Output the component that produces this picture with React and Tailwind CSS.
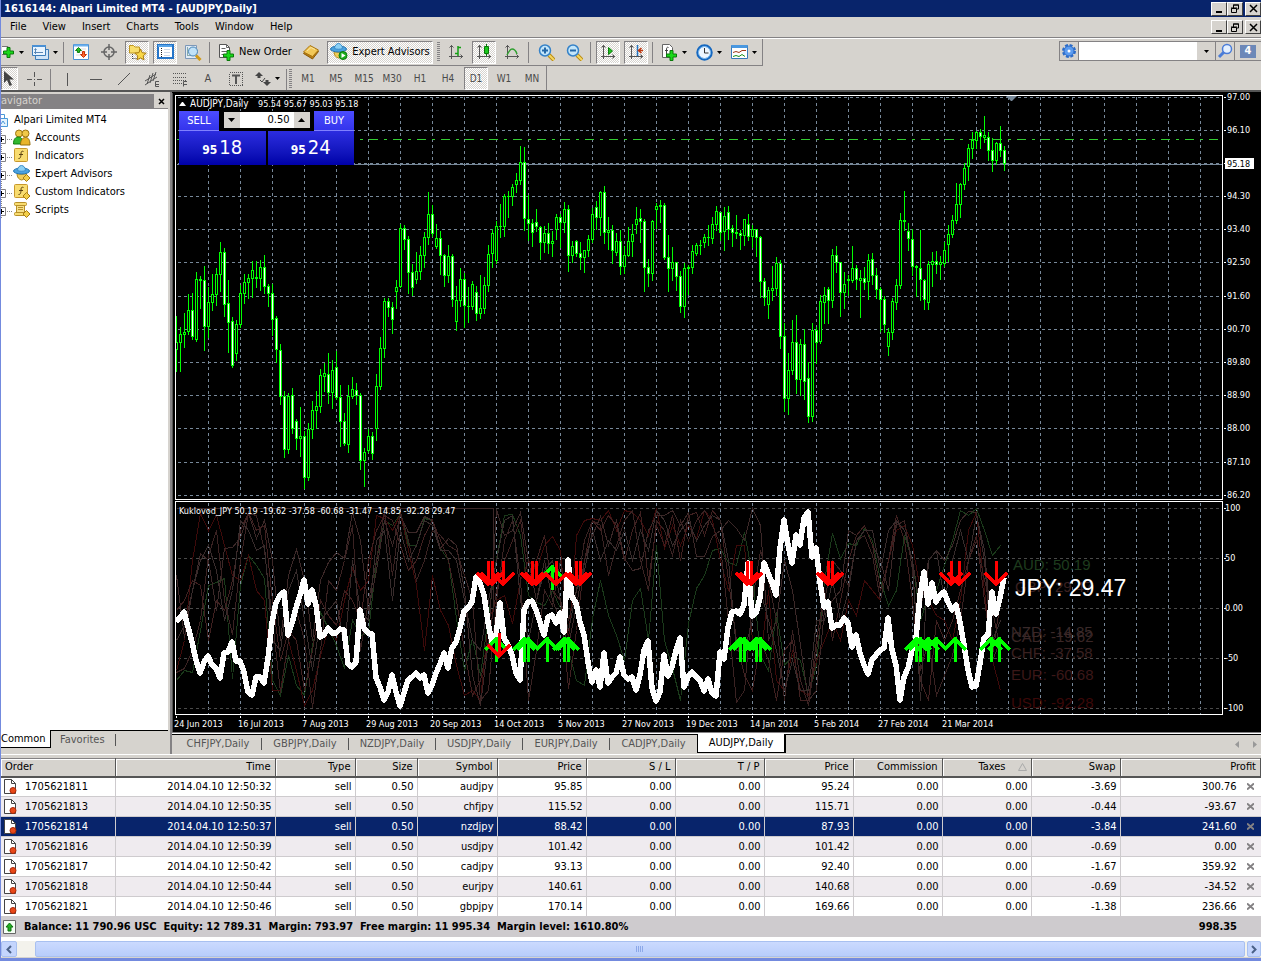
import React from 'react';
import clsx from 'clsx';

const menus = ['File', 'View', 'Insert', 'Charts', 'Tools', 'Window', 'Help'];
const periods = ['M1', 'M5', 'M15', 'M30', 'H1', 'H4', 'D1', 'W1', 'MN'];
const chartTabs = ['CHFJPY', 'GBPJPY', 'NZDJPY', 'USDJPY', 'EURJPY', 'CADJPY', 'AUDJPY'];

const columns = [
  { label: 'Order', width: 'w-[114px]' },
  { label: 'Time', width: 'w-[160px]' },
  { label: 'Type', width: 'w-[80px]' },
  { label: 'Size', width: 'w-[62px]' },
  { label: 'Symbol', width: 'w-[80px]' },
  { label: 'Price', width: 'w-[89px]' },
  { label: 'S / L', width: 'w-[89px]' },
  { label: 'T / P', width: 'w-[89px]' },
  { label: 'Price', width: 'w-[89px]' },
  { label: 'Commission', width: 'w-[89px]' },
  { label: 'Taxes', width: 'w-[89px]' },
  { label: 'Swap', width: 'w-[89px]' },
  { label: 'Profit', width: '' },
];

const orders = [
  { id: '1705621811', sec: '32', symbol: 'audjpy', open: '95.85', price: '95.24', swap: '-3.69', profit: '300.76' },
  { id: '1705621813', sec: '35', symbol: 'chfjpy', open: '115.52', price: '115.71', swap: '-0.44', profit: '-93.67' },
  { id: '1705621814', sec: '37', symbol: 'nzdjpy', open: '88.42', price: '87.93', swap: '-3.84', profit: '241.60', selected: true },
  { id: '1705621816', sec: '39', symbol: 'usdjpy', open: '101.42', price: '101.42', swap: '-0.69', profit: '0.00' },
  { id: '1705621817', sec: '42', symbol: 'cadjpy', open: '93.13', price: '92.40', swap: '-1.67', profit: '359.92' },
  { id: '1705621818', sec: '44', symbol: 'eurjpy', open: '140.61', price: '140.68', swap: '-0.69', profit: '-34.52' },
  { id: '1705621821', sec: '46', symbol: 'gbpjpy', open: '170.14', price: '169.66', swap: '-1.38', profit: '236.66' },
];

// high, body top, body bottom, low, 1 = falling day
const candles = [
  [316,342,349,371,0],[327,334,342,371,0],[313,332,334,347,0],[294,310,331,334,0],[293,310,336,339,1],[272,279,339,341,0],
  [276,279,280,308,0],[266,280,326,350,1],[287,302,326,337,0],[274,294,302,310,0],[268,274,294,305,0],[242,252,274,291,0],
  [248,252,304,316,1],[280,303,322,352,1],[317,321,365,367,1],[320,324,353,360,0],[285,293,324,327,0],[274,282,293,303,0],
  [274,278,282,298,0],[261,270,278,297,0],[261,277,278,287,0],[260,267,278,290,0],[255,267,286,293,1],[284,286,293,306,1],
  [284,293,319,335,1],[316,318,349,362,1],[344,350,396,404,1],[391,396,449,457,1],[393,396,449,453,0],[388,395,428,433,1],
  [419,421,438,449,1],[407,436,438,456,0],[431,436,477,488,1],[423,429,477,480,0],[401,410,429,438,0],[391,406,410,428,0],
  [369,375,406,412,0],[363,373,376,391,0],[353,374,392,403,1],[360,370,392,408,0],[351,367,397,399,1],[385,397,421,446,1],
  [413,421,443,445,1],[385,396,444,452,0],[377,389,396,398,0],[383,390,395,404,1],[393,395,460,469,1],[448,452,460,486,0],
  [429,436,450,452,0],[432,436,453,459,1],[374,386,428,440,0],[337,348,386,389,0],[298,301,348,357,0],[298,301,307,316,1],
  [302,307,319,333,1],[280,287,291,308,0],[224,228,286,287,0],[225,228,239,249,1],[236,239,272,293,1],[264,272,287,295,1],
  [252,271,279,283,0],[246,255,271,279,0],[232,237,255,267,0],[192,214,237,244,0],[205,214,233,236,1],[224,238,246,248,0],
  [231,238,255,274,1],[254,255,275,286,1],[245,256,275,282,0],[254,256,299,306,1],[286,300,321,330,0],[268,279,300,306,0],
  [273,279,305,327,1],[287,306,306,322,0],[281,284,306,309,0],[286,292,313,320,1],[275,308,313,318,0],[277,285,308,313,0],
  [245,254,285,291,0],[229,233,253,267,0],[221,226,260,263,0],[204,226,226,237,0],[194,196,226,236,0],[191,196,196,217,0],
  [184,187,196,205,0],[173,180,184,192,0],[146,162,180,184,0],[147,162,218,230,1],[195,219,223,240,1],[219,223,232,246,1],
  [209,222,226,231,1],[226,227,242,259,1],[226,233,242,252,0],[223,233,243,253,1],[231,241,243,256,0],[214,217,229,239,0],
  [214,217,222,247,1],[202,209,222,232,0],[205,209,255,271,1],[241,246,255,262,0],[240,241,253,256,1],[242,253,257,269,1],
  [250,250,257,272,0],[235,239,250,256,0],[208,214,239,242,0],[201,207,217,229,1],[191,192,217,235,0],[186,192,232,243,1],
  [217,230,232,249,0],[225,230,250,263,1],[233,241,252,255,0],[230,241,266,274,1],[246,255,266,273,0],[227,241,255,256,0],
  [224,234,241,256,0],[207,219,224,233,0],[209,218,221,242,1],[219,221,267,291,1],[259,267,273,286,1],[220,221,273,280,0],
  [203,206,209,228,0],[200,205,206,222,0],[203,205,257,259,1],[235,257,268,291,1],[247,262,268,280,0],[262,262,276,290,1],
  [271,276,306,312,1],[263,268,306,317,0],[265,267,268,294,0],[245,251,267,273,0],[243,245,253,255,0],[240,245,245,254,0],
  [234,237,242,247,0],[225,237,237,245,0],[217,224,238,243,0],[206,211,224,230,0],[212,212,232,240,1],[207,216,231,250,0],
  [206,212,229,239,1],[225,228,232,246,1],[215,232,233,238,0],[230,233,235,249,1],[219,219,235,245,0],[214,224,236,240,1],
  [225,229,236,247,0],[229,229,237,256,1],[236,237,281,297,1],[278,281,297,305,1],[287,290,304,318,0],[266,288,290,300,0],
  [257,263,288,295,0],[260,263,336,348,1],[323,336,398,411,1],[353,370,398,414,0],[320,342,370,374,0],[315,342,379,393,1],
  [339,344,379,395,0],[329,344,381,399,1],[362,378,416,422,1],[323,330,416,421,0],[327,330,342,363,1],[295,301,341,343,0],
  [287,295,302,323,0],[287,289,300,323,1],[249,255,300,307,0],[246,255,262,272,1],[262,262,292,316,1],[272,284,292,308,0],
  [275,279,280,295,0],[246,268,280,282,0],[265,268,279,289,1],[270,278,280,317,0],[267,278,282,289,1],[254,260,281,299,0],
  [253,259,275,284,1],[268,275,289,298,1],[287,289,299,331,1],[296,299,324,332,1],[328,332,346,355,0],[298,301,332,339,0],
  [279,285,302,309,0],[213,220,285,288,0],[191,220,221,230,0],[223,231,238,250,1],[229,239,266,275,1],[265,266,267,296,0],
  [230,268,279,300,1],[279,280,299,309,1],[261,264,302,309,0],[252,261,264,286,0],[251,261,264,273,1],[256,262,264,279,0],
  [242,250,263,266,0],[225,234,244,261,0],[215,220,234,237,0],[183,204,220,223,0],[183,184,204,217,0],[163,168,184,189,0],
  [144,148,166,180,0],[132,140,148,158,0],[131,132,140,148,0],[129,132,136,148,1],[116,135,137,142,0],[132,137,150,160,1],
  [138,150,160,171,1],[142,143,160,164,0],[126,143,150,156,1],[146,150,163,170,1],
];

// strength of the yen, one value per bar
const strength = [
  621,618,612,627,642,660,673,662,656,665,668,678,653,652,642,661,661,672,692,695,677,677,683,658,623,603,595,592,635,623,
  608,595,580,604,590,605,637,635,628,633,633,629,630,664,667,662,610,628,633,634,678,687,700,692,675,692,706,693,680,677,
  673,678,675,693,685,673,664,653,668,648,642,628,611,608,602,577,583,595,622,642,635,603,638,645,655,673,680,610,602,601,
  610,622,635,617,615,623,613,632,560,597,603,622,635,662,682,670,687,653,683,677,673,657,675,679,677,690,675,650,641,688,
  701,692,655,676,667,650,638,687,677,672,677,680,691,679,693,696,652,659,627,612,611,614,605,563,616,613,598,563,573,583,
  595,548,520,545,563,535,545,518,512,557,548,582,607,602,628,625,625,618,623,647,635,653,665,674,660,655,650,648,618,650,
  665,700,677,668,650,638,595,572,604,583,602,595,592,602,610,605,622,645,670,687,686,663,638,635,592,614,598,578,
];

// remaining currencies, one value per two bars
const others = [
  { color: '#1a3a1a', ys: [680,670,672,630,585,582,578,678,585,555,565,578,680,695,655,685,695,645,612,628,645,668,620,635,632,560,520,525,513,545,545,518,520,548,560,618,670,638,675,615,558,515,514,535,595,602,605,590,608,650,680,685,618,580,615,635,660,600,588,640,545,640,668,700,623,588,575,550,548,562,565,532,575,655,670,612,665,655,660,695,665,580,533,558,543,545,528,540,580,605,590,535,560,620,595,590,565,540,510,515,508,530,555,545] },
  { color: '#3e0a0a', ys: [670,640,560,513,530,515,545,575,580,555,590,600,690,690,640,670,705,690,655,628,640,600,568,590,580,515,518,530,514,550,585,650,575,610,625,665,695,690,700,620,600,595,623,580,560,570,545,536,550,640,535,520,518,520,510,530,510,512,520,535,508,548,525,545,525,538,510,520,560,590,545,545,640,660,590,680,690,650,690,695,660,640,620,640,600,615,580,590,600,560,530,525,545,590,600,615,620,640,600,530,512,590,660,690] },
  { color: '#3c2828', ys: [575,637,590,553,560,610,548,547,537,512,538,520,560,640,575,549,580,640,580,562,552,558,512,540,610,570,520,545,515,532,532,516,520,548,538,545,590,675,705,640,509,535,530,512,560,600,560,600,620,645,605,560,535,516,545,520,558,570,568,530,515,515,510,525,512,556,556,536,530,520,528,540,508,525,640,620,560,590,645,700,690,610,600,590,530,535,525,545,560,590,520,530,560,610,560,550,560,545,520,511,512,560,660,640] },
  { color: '#3a2222', ys: [672,668,650,620,555,530,600,634,560,513,515,550,620,692,640,610,640,707,650,580,590,560,525,650,600,560,510,575,512,540,580,560,530,535,545,550,575,600,700,690,600,540,520,580,700,650,590,605,560,620,590,540,520,525,575,545,520,510,560,590,520,530,555,520,540,520,510,525,545,620,702,690,600,550,580,620,700,630,680,705,650,600,560,570,585,540,535,555,600,560,525,520,570,670,640,695,675,655,620,560,540,580,610,650] },
  { color: '#402020', ys: [610,600,580,585,640,600,610,580,530,512,530,525,600,660,630,640,690,650,600,615,625,590,600,620,560,530,515,520,545,570,560,535,520,540,560,600,650,695,680,640,590,560,540,520,580,560,535,590,600,688,630,560,520,530,515,525,560,530,512,580,525,545,515,560,515,512,535,510,520,580,640,675,690,640,660,700,650,640,700,700,640,590,640,600,560,535,525,545,590,560,515,540,600,680,700,620,640,620,590,560,535,600,655,600] },
  { color: '#382c2c', ys: [640,625,590,560,545,570,620,590,520,530,550,545,640,650,590,570,620,670,620,610,600,650,560,610,620,540,530,600,530,560,545,520,525,550,550,560,600,640,650,600,560,520,515,600,640,600,570,560,600,630,590,570,530,560,540,550,530,560,530,550,510,520,545,530,520,540,525,515,520,560,650,650,620,590,620,650,690,660,690,690,620,620,580,620,590,540,530,530,570,530,520,530,560,700,560,550,600,560,530,560,515,550,640,620] },
];

const gridX = Array.from({ length: 32 }, (_, i) => 208 + i * 32);
const priceScale = [
  [97, '97.00'], [130, '96.10'], [163, ''], [196, '94.30'], [229, '93.40'], [262, '92.50'], [296, '91.60'],
  [329, '90.70'], [362, '89.80'], [395, '88.90'], [428, '88.00'], [462, '87.10'], [495, '86.20'],
];
const levelScale = [[508, '100'], [558, '50'], [608, '0.00'], [658, '-50'], [708, '-100']];
const dates = [
  '24 Jun 2013', '16 Jul 2013', '7 Aug 2013', '29 Aug 2013', '20 Sep 2013', '14 Oct 2013', '5 Nov 2013',
  '27 Nov 2013', '19 Dec 2013', '14 Jan 2014', '5 Feb 2014', '27 Feb 2014', '21 Mar 2014',
];
const ghostLabels = [
  ['AUD: 50.19', 1013, 570, '#1e3c1e'],
  ['GBP: 29.47', 1015, 592, '#3a2020'],
  ['NZD: -14.85', 1011, 637, '#3a2a2a'],
  ['CAD: -19.62', 1011, 642, '#3a2626'],
  ['CHF: -37.58', 1011, 658, '#3a2020'],
  ['EUR: -60.68', 1011, 680, '#3c1818'],
  ['USD: -92.28', 1011, 708, '#3c0808'],
];
const buys = [
  [496, 637], [524, 637], [528, 637], [547, 637], [564, 637], [568, 637], [552, 565], [740, 637], [744, 637], [756, 637], [760, 637],
  [916, 637], [920, 637], [928, 637], [936, 637], [955, 637], [991, 637], [999, 637],
];
const sells = [
  [488, 561], [492, 561], [503, 561], [532, 561], [536, 561], [556, 561], [576, 561], [580, 561], [499, 633],
  [747, 561], [751, 561], [828, 561], [832, 561], [951, 561], [959, 561], [996, 561],
];

const Svg = ({ w = 16, h = 16, children }) => (
  <svg width={w} height={h} viewBox={`0 0 ${w} ${h}`} className="shrink-0" fill="none" aria-hidden="true">
    {children}
  </svg>
);

const Plus = ({ x, y }) => (
  <path transform={`translate(${x} ${y})`} d="M4 .5h3V4h3.500v3H7v3.500H4V7H.5V4H4z" fill="#19d819" stroke="#0a7a0a" />
);

const Drop = () => <Svg w={5} h={3}><path d="M0 0h5L2.500 3z" fill="#000" /></Svg>;

const Axes = ({ children }) => (
  <Svg>
    <path d="M3.500 1v14M1 12.500h14M1.500 3.500l2-2 2 2M12.500 10.500l2 2-2 2" stroke="#555" />
    {children}
  </Svg>
);

const Hat = ({ children }) => (
  <Svg w={18} h={18}>
    <path d="M4 8.500c0 4 2 6 4.500 6.500 3-.5 5-2.500 5-6.500-3 1-6 1-9.500 0z" fill="#f0cc58" stroke="#b08a20" />
    <ellipse cx="8.500" cy="6" rx="8" ry="3" fill="#4aa2e0" stroke="#2474b0" />
    <path d="M4.500 5.500c0-3 2-5 4-5s4 2 4 5c-2 1-6 1-8 0z" fill="#8cd0f4" stroke="#3a8cc8" />
    {children}
  </Svg>
);

const Diamond = () => <path d="M13.500 9.500l3.500 3.500-3.500 3.500-3.500-3.500z" fill="#f3cf4a" stroke="#a87d10" />;

const Lens = ({ minus }) => (
  <Svg w={17} h={17}>
    <path d="M11 11l5 5" stroke="#b98a10" strokeWidth="4" />
    <path d="M11 11l5 5" stroke="#f5d660" strokeWidth="2" />
    <circle cx="7" cy="6.500" r="5.500" fill="#c4e6fa" stroke="#3582c8" strokeWidth="1.500" />
    <path d={minus ? 'M4 6.500h6' : 'M4 6.500h6M7 3.500v6'} stroke="#2468a8" strokeWidth="2" />
  </Svg>
);

const icons = {
  newChart: <Svg w={13} h={16}><path d="M0 2.500h6v8H0" fill="#fff" stroke="#777" /><Plus x={1} y={3} /></Svg>,
  profiles: (
    <Svg w={18}>
      <path d="M4.500 5.500h13v10h-13z" fill="#cfe4f8" stroke="#3d7cb8" />
      <path d="M1.500 1.500h13v10h-13z" fill="#e8f4ff" stroke="#3d7cb8" />
      <path d="M1 2h14" stroke="#4a90d4" strokeWidth="2" />
      <path d="M4.500 5v5M3 8.500h9M3.500 6l1-1.500 1 1.500" stroke="#5b87b5" />
    </Svg>
  ),
  market: (
    <Svg>
      <path d="M.5.5h15v15H.5z" fill="#fff" stroke="#4a90d4" />
      <path d="M1 1.500h14" stroke="#6cb0ee" strokeWidth="2" />
      <path d="M3 5h10M3 8h10M3 11h10" stroke="#ddd" />
      <path d="M5.500 3.500l3 3h-2v2h-2v-2h-2z" fill="#22c022" stroke="#128012" />
      <path d="M10.500 13.500l3-3h-2v-3h-2v3h-2z" fill="#ff6a30" stroke="#c83208" />
    </Svg>
  ),
  target: (
    <Svg>
      <circle cx="8" cy="8" r="5" stroke="#666" strokeWidth="1.500" />
      <path d="M8 0v6M8 10v6M0 8h6M10 8h6" stroke="#666" strokeWidth="1.500" />
    </Svg>
  ),
  navigator: (
    <Svg w={19} h={17}>
      <path d="M1.500 3V1.500h4L7 3h4.500v6h-10z" fill="#f9df6c" stroke="#c09820" />
      <path d="M4.500 10v5M4.500 14.500h5" stroke="#444" strokeDasharray="1 1" />
      <path d="M12.500 5l1.700 3.700 4 .5-3 2.700.8 4-3.500-2-3.500 2 .8-4-3-2.700 4-.5z" fill="#f9d848" stroke="#a87a10" />
    </Svg>
  ),
  terminal: (
    <Svg w={17}>
      <rect x="1" y="1" width="15" height="13" fill="#fff" stroke="#2474c8" strokeWidth="2" />
      <path d="M1 2h14" stroke="#58a4e8" strokeWidth="2" />
      <path d="M4.500 4v9" stroke="#222" strokeDasharray="1 1" />
      <path d="M7 5.500h6M7 8.500h6M7 11.500h6" stroke="#ccd8e8" />
    </Svg>
  ),
  tester: (
    <Svg w={18} h={17}>
      <path d="M1.500 1.500h11v13h-11z" fill="#e2ebf5" stroke="#7c98b8" />
      <path d="M3.500 3v9M3 11.500h8M5 4l2 3 3-3" stroke="#8aa" />
      <circle cx="9" cy="7.500" r="4.500" fill="#c0e2f8" stroke="#4a86b8" />
      <path d="M12 11.500l4.500 4.500" stroke="#d09a18" strokeWidth="3" />
    </Svg>
  ),
  order: (
    <Svg w={17} h={17}>
      <path d="M1.500.5h7l3 3v10h-10z" fill="#fff" stroke="#555" />
      <path d="M8.500.5v3h3M3.500 4.500h4M3.500 7.500h6M3.500 10.500h3" stroke="#666" />
      <Plus x={5} y={6} />
    </Svg>
  ),
  book: (
    <Svg>
      <path d="M.5 9.500L7 2.500l8.500 5-6 7.500z" fill="#b87c10" stroke="#8a5a08" />
      <path d="M.5 8L7 1.500l8.500 4.500L9.500 12.500z" fill="#f2c858" stroke="#a87410" />
      <path d="M4 7l4-3.500 4 2" stroke="#fbe7a4" />
    </Svg>
  ),
  expert: <Hat><circle cx="13" cy="12.500" r="4" fill="#1cae1c" stroke="#0c7a0c" /><path d="M11.500 10l4 2.500-4 2.500z" fill="#fff" /></Hat>,
  bars: <Axes><path d="M10 2v10M10 3.500h3M7 9.500h3" stroke="#14a014" strokeWidth="1.500" /></Axes>,
  candle: <Axes><path d="M10.500 0v12" stroke="#087808" /><path d="M8.500 2.500h4v7h-4z" fill="#1cc81c" stroke="#087808" /></Axes>,
  line: <Axes><path d="M3 11c2-4 3-6 5-6 2.500 0 4 2 5 5" stroke="#30a030" strokeWidth="1.500" /></Axes>,
  scroll: <Axes><path d="M8.500 3.500l4 3.500-4 3.500z" fill="#20c020" stroke="#0a800a" /></Axes>,
  shift: <Axes><path d="M9.500 1v11" stroke="#2474c0" strokeWidth="1.500" /><path d="M15 6.500h-4M13.500 4l-3 2.500 3 2.500" stroke="#c03810" strokeWidth="1.500" /></Axes>,
  indicators: (
    <Svg w={17} h={17}>
      <path d="M1.500.5h7l3 3v10h-10z" fill="#fff" stroke="#666" />
      <path d="M7.500 3.500c-2-1-2 1-2 2.500v5M4 6.500h3" stroke="#444" />
      <Plus x={5} y={6} />
    </Svg>
  ),
  clock: (
    <Svg w={17} h={17}>
      <circle cx="8.500" cy="8.500" r="7" fill="#eef6ff" stroke="#1668c0" strokeWidth="2.500" />
      <circle cx="8.500" cy="8.500" r="6" stroke="#8cc4f4" />
      <path d="M8.500 4v5h4" stroke="#333" />
    </Svg>
  ),
  template: (
    <Svg w={17}>
      <path d="M.5 1.500h16v13H.5z" fill="#fff" stroke="#3878b8" />
      <path d="M.5 2.500h16" stroke="#4a98e0" strokeWidth="3" />
      <path d="M2 8.500l3-1 3 1 3-2 4 0" stroke="#a03818" />
      <path d="M2 12.500l3-1 3 1 3-2 3 2" stroke="#189018" />
    </Svg>
  ),
  pointer: <Svg w={12} h={16}><path d="M0 0v12l3-3 2.500 6 2.500-1-2.500-5.500H10z" fill="#444" /></Svg>,
  cross: <Svg><path d="M8.500 1v5M8.500 11v4M1 8.500h5M11 8.500h5M8 8.500h1" stroke="#555" /></Svg>,
  vline: <Svg><path d="M7.500 2v13" stroke="#555" /></Svg>,
  hline: <Svg><path d="M2 8.500h12" stroke="#555" /></Svg>,
  trend: <Svg><path d="M2 14L14 2" stroke="#555" /></Svg>,
  channel: (
    <Svg>
      <path d="M1 10L12 3M1 14L13 6M3 13L6 4M6 12L9 2M9 10l3-9" stroke="#555" />
      <path d="M15 10.500h-3.500v5H15M12 13.500h3" stroke="#555" />
    </Svg>
  ),
  fibo: (
    <Svg>
      <path d="M1 2.500h14M1 6.500h14M1 9.500h14M1 12.500h9" stroke="#555" strokeDasharray="1 1" />
      <path d="M15 10.500h-3.500v5M12 13.500h3" stroke="#555" />
    </Svg>
  ),
  label: (
    <Svg>
      <path d="M1.500 1.500h13v13h-13z" stroke="#555" strokeDasharray="1 1" shapeRendering="crispEdges" />
      <path d="M4 4.500h8M8 4v9" stroke="#555" strokeWidth="2" />
    </Svg>
  ),
  shapes: (
    <Svg>
      <path d="M4 1l4 4H5.500v2h-3V5H0zM12 15l-4-4h2.500V9h3v2H16z" fill="#444" />
      <path d="M5 9l2 2 3-4" stroke="#444" />
    </Svg>
  ),
};

const pressedLook =
  'border border-t-[#848284] border-l-[#848284] border-r-white border-b-white bg-[conic-gradient(#fff_25%,#d6d3ce_0_50%,#fff_0_75%,#d6d3ce_0)] bg-[length:2px_2px]';

const Tool = ({ label, icon, drop, text, pressed, width = 'w-6' }) => (
  <button
    type="button"
    aria-label={label}
    className={clsx('flex h-[23px] shrink-0 items-center justify-center gap-1', width, pressed && pressedLook)}
  >
    {icon}
    {text && <span className="whitespace-nowrap">{text}</span>}
    {drop && <Drop />}
  </button>
);

const Sep = () => <div className="h-[21px] w-0.5 shrink-0 border-l border-[#848284]" />;

const Grip = () => (
  <div className="h-5 w-[3px] shrink-0 bg-[repeating-linear-gradient(#848284_0_1px,#d6d3ce_1px_2px)]" />
);

const CaptionButtons = () => (
  <div className="flex">
    {['Minimize', 'Restore', 'Close'].map((name) => (
      <button
        key={name}
        type="button"
        aria-label={name}
        className={clsx(
          'flex h-[14px] w-4 items-center justify-center border border-t-white border-l-white border-r-[#404040] border-b-[#404040] bg-[#d6d3ce]',
          name === 'Close' && 'ml-0.5'
        )}
      >
        <Svg w={9} h={9}>
          {name === 'Minimize' && <path d="M1 8h6" stroke="#000" strokeWidth="2" />}
          {name === 'Restore' && <path d="M2.500 4V1h5v4H6M.5 4.500h5v4h-5zM2 1h6M0 4h6" stroke="#000" />}
          {name === 'Close' && <path d="M1 1l7 7M8 1L1 8" stroke="#000" strokeWidth="1.500" />}
        </Svg>
      </button>
    ))}
  </div>
);

const Toolbars = () => (
  <div className="flex justify-between">
    <div>
      <div className="flex h-[27px] w-[762px] items-center gap-1 border-r border-b border-[#848284]">
        <Tool label="New chart" icon={icons.newChart} drop />
        <Tool label="Profiles" icon={icons.profiles} drop width="w-[30px]" />
        <Sep />
        <Tool label="Market watch" icon={icons.market} />
        <Tool label="Data window" icon={icons.target} />
        <Tool label="Navigator" icon={icons.navigator} pressed />
        <Tool label="Terminal" icon={icons.terminal} pressed />
        <Tool label="Strategy tester" icon={icons.tester} />
        <Sep />
        <Tool label="New Order" icon={icons.order} text="New Order" width="w-[80px]" />
        <Tool label="MetaEditor" icon={icons.book} />
        <Tool label="Expert Advisors" icon={icons.expert} text="Expert Advisors" pressed width="w-[106px]" />
        <Grip />
        <Tool label="Bar chart" icon={icons.bars} />
        <Tool label="Candlesticks" icon={icons.candle} pressed />
        <Tool label="Line chart" icon={icons.line} />
        <Sep />
        <Tool label="Zoom in" icon={<Lens />} />
        <Tool label="Zoom out" icon={<Lens minus />} />
        <Sep />
        <Tool label="Auto scroll" icon={icons.scroll} pressed />
        <Tool label="Chart shift" icon={icons.shift} pressed />
        <Sep />
        <Tool label="Indicators" icon={icons.indicators} drop width="w-[31px]" />
        <Tool label="Periods" icon={icons.clock} drop width="w-[31px]" />
        <Tool label="Templates" icon={icons.template} drop width="w-[31px]" />
      </div>
      <div className="flex h-6 w-[546px] items-end gap-1 border-r border-[#848284] text-[#4a4a4a]">
        <Tool label="Cursor" icon={icons.pointer} pressed width="w-[17px]" />
        <Tool label="Crosshair" icon={icons.cross} />
        <Sep />
        <Tool label="Vertical line" icon={icons.vline} />
        <Tool label="Horizontal line" icon={icons.hline} />
        <Tool label="Trendline" icon={icons.trend} />
        <Tool label="Channel" icon={icons.channel} />
        <Tool label="Fibonacci" icon={icons.fibo} />
        <Tool label="Text" text="A" />
        <Tool label="Text label" icon={icons.label} />
        <Tool label="Arrows" icon={icons.shapes} drop width="w-[30px]" />
        <div className="flex gap-px">
          <Sep />
          <Grip />
        </div>
        <div className="flex gap-1 text-[10px]">
          {periods.map((p) => <Tool key={p} label={p} text={p} pressed={p === 'D1'} />)}
        </div>
      </div>
    </div>
    <div className="mt-0.5 flex h-5 border border-r-0 border-[#848284]">
      <button type="button" aria-label="Search options" className="flex w-[19px] items-center justify-center border-r border-[#848284]">
        <Svg>
          <circle cx="8" cy="8" r="6" stroke="#2c6cc8" strokeWidth="2" strokeDasharray="3 1.700" />
          <circle cx="8" cy="8" r="5" fill="#5c9cf0" stroke="#2868c8" />
          <circle cx="8" cy="8" r="1.500" fill="#fff" />
        </Svg>
      </button>
      <input aria-label="Search" className="w-[118px] bg-white px-1 outline-none" />
      <button type="button" aria-label="Search history" className="flex w-[19px] items-center justify-center border-r border-[#848284]">
        <Drop />
      </button>
      <button type="button" aria-label="Find" className="flex w-[19px] items-center justify-center border-r border-[#848284]">
        <Svg>
          <path d="M7 9l-5 5" stroke="#4a7cd8" strokeWidth="3" />
          <circle cx="10" cy="6" r="4.500" fill="#e4f0ff" stroke="#4a7cd8" strokeWidth="1.500" />
        </Svg>
      </button>
      <button type="button" aria-label="Messages" className="flex w-[26px] items-center justify-center">
        <span className="flex h-[13px] w-4 items-center justify-center bg-[#6c88b8] font-bold text-white">4</span>
      </button>
    </div>
  </div>
);

const FunctionIcon = ({ children }) => (
  <Svg w={18} h={18}>
    <rect x="1.500" y="1.500" width="13" height="13" rx="1" fill="#f8dc70" stroke="#c8982c" />
    <path d="M10.500 4.500c-2-1-2.500.5-2.500 2.500s-.5 5-2.500 4.500M6 7.500h4" stroke="#5a4010" />
    {children}
  </Svg>
);

const treeItems = [
  {
    name: 'Accounts',
    icon: (
      <Svg w={18} h={18}>
        <circle cx="6" cy="4.500" r="3.500" fill="#f0c848" stroke="#9a7410" />
        <circle cx="12.500" cy="4.500" r="3.500" fill="#f0c848" stroke="#9a7410" />
        <path d="M.5 15c0-5 2-7 5-7s4 2 4 7z" fill="#30b830" stroke="#0f7c0f" />
        <path d="M7.500 16c0-5 2-7.500 5-7.500s4.500 2.500 4.500 7.500z" fill="#e8b428" stroke="#94700c" />
      </Svg>
    ),
  },
  { name: 'Indicators', icon: <FunctionIcon /> },
  { name: 'Expert Advisors', icon: <Hat><Diamond /></Hat> },
  { name: 'Custom Indicators', icon: <FunctionIcon><Diamond /></FunctionIcon> },
  {
    name: 'Scripts',
    icon: (
      <Svg w={18} h={18}>
        <path d="M3.500 4v9h8V4z" fill="#f6e088" stroke="#b89028" />
        <rect x="1.500" y="1.500" width="12" height="3" rx="1" fill="#f8dc70" stroke="#b89028" />
        <rect x="1.500" y="11.500" width="12" height="3" rx="1" fill="#f8dc70" stroke="#b89028" />
        <path d="M5 6.500h5M5 8.500h5" stroke="#b89028" />
        <Diamond />
      </Svg>
    ),
  },
];

const Navigator = () => (
  <aside className="flex w-[171px] shrink-0 flex-col border-r-2 border-[#848284] pt-0.5 pr-0.5">
    <div className="flex h-[14px] items-center">
      <div className="h-full flex-1 overflow-hidden bg-[#848284] leading-[14px] text-[#d6d3ce]">avigator</div>
      <button type="button" aria-label="Close navigator" className="flex w-[14px] justify-center">
        <Svg w={7} h={7}><path d="M1 1l5 5M6 1L1 6" stroke="#000" strokeWidth="1.500" /></Svg>
      </button>
    </div>
    <div className="flex-1 border-t border-[#848284] bg-white pt-0.5">
      <div className="flex h-[18px] items-center gap-1.5">
        <Svg w={7}>
          <path d="M0 2.500h3.500V6" stroke="#4a98d8" />
          <path d="M-3 6.500h9.500v8H-3z" fill="#e4f2fc" stroke="#4a98d8" />
          <path d="M0 12l2-3 2 3" stroke="#4a98d8" />
        </Svg>
        Alpari Limited MT4
      </div>
      <ul>
        {treeItems.map((item) => (
          <li key={item.name} className="flex h-[18px] items-center">
            <Svg w={12} h={18}>
              <path d="M.5 0v6M.5 14v4M6 10.500h5" stroke="#888" strokeDasharray="1 1" />
              <path d="M-4 6.500h8.500v8H-4" stroke="#848284" />
              <path d="M-1 10.500h4M.5 8v5" stroke="#000" />
            </Svg>
            {item.icon}
            <span className="ml-1">{item.name}</span>
          </li>
        ))}
      </ul>
    </div>
    <div className="flex h-6 text-[#555]">
      <button type="button" className="h-[18px] w-[50px] border-r border-b border-black bg-white pr-2 text-right leading-[17px] text-black">
        Common
      </button>
      <div className="flex h-[18px] flex-1 items-center gap-2.5 border-t border-black pl-[9px]">
        <button type="button">Favorites</button>
        <span className="h-3 w-px bg-[#555]" />
      </div>
    </div>
  </aside>
);

const toPoints = (ys, step) => ys.map((y, i) => `${176 + i * step},${y}`).join(' ');

const PriceChart = () => (
  <svg viewBox="172 92 1089 640" className="block h-auto w-full bg-black text-[9px]" role="img" aria-label="AUDJPY daily chart">
    <g shapeRendering="crispEdges" transform="translate(0.5 0.5)" fill="none">
      <g stroke="#778899" strokeDasharray="3 3">
        {gridX.map((x) => <path key={x} d={`M${x} 96V498M${x} 502V713`} />)}
        {priceScale.map(([y]) => <path key={y} d={`M177 ${y}H1221`} />)}
      </g>
      <g stroke="#4a4a4a" strokeDasharray="3 3">
        {levelScale.map(([y]) => <path key={y} d={`M177 ${y}H1221`} />)}
      </g>
      <path d="M176 139H1218" stroke="#32cd32" strokeDasharray="9 6 3 6" />
      <path d="M176 164H1222" stroke="#778899" />
      {others.map((line) => (
        <polyline key={line.color} points={toPoints(line.ys, 8)} stroke={line.color} />
      ))}
      <path d="M176 508H493V608" stroke="#3c2828" />
    </g>

    {/* whole-pixel boxes: wick, outline, then the one pixel core */}
    <g shapeRendering="crispEdges">
      {candles.map(([high, top, bottom, low, falling], i) => (
        <g key={i} fill="#00ff00">
          <rect x={176 + i * 4} y={high} width="1" height={low - high + 1} />
          <rect x={175 + i * 4} y={top} width="3" height={bottom - top + 1} />
          {bottom - top > 1 && (
            <rect x={176 + i * 4} y={top + 1} width="1" height={bottom - top - 1} fill={falling ? '#fff' : '#000'} />
          )}
        </g>
      ))}
    </g>

    <g fontFamily="Liberation Sans" fontSize="15">
      {ghostLabels.map(([text, x, y, color]) => <text key={text} x={x} y={y} fill={color}>{text}</text>)}
    </g>
    <polyline points={toPoints(strength, 4)} fill="none" stroke="#fff" strokeWidth="5.500" strokeLinejoin="round" shapeRendering="crispEdges" />
    <g fill="none" strokeWidth="3" shapeRendering="crispEdges">
      {buys.map(([x, y]) => (
        <path key={`${x}-${y}`} d={`M${x} ${y}v25M${x - 11} ${y + 13}l11 -11l11 11`} stroke="#00ff00" />
      ))}
      {sells.map(([x, y]) => (
        <path key={`${x}-${y}`} d={`M${x} ${y}v24M${x - 11} ${y + 12}l11 11l11 -11`} stroke="#ff0000" />
      ))}
    </g>
    <text x="1015" y="596" fontFamily="Liberation Sans" fontSize="23" fill="#fff">JPY: 29.47</text>

    <g shapeRendering="crispEdges" transform="translate(0.5 0.5)" fill="none" stroke="#fff">
      <path d="M175 499V95H1222V499ZM175 714V501H1222V714Z" />
      {priceScale.map(([y]) => <path key={y} d={`M1223 ${y}h2`} />)}
      {levelScale.map(([y]) => <path key={y} d={`M1223 ${y}h2`} />)}
      {dates.map((d, i) => <path key={d} d={`M${176 + i * 64} 715v2`} />)}
      <path d="M172 92V732" stroke="#555" />
    </g>
    <path d="M1006 96h11l-5 5h-1z" fill="#778899" />
    <path d="M179 106h7l-3-4h-1z" fill="#fff" />

    <g fill="#fff">
      <text x="190" y="107" fontSize="10">AUDJPY,Daily</text>
      <text x="258" y="107">95.54 95.67 95.03 95.18</text>
      <text x="179" y="514">Kuklovod_JPY 50.19 -19.62 -37.58 -60.68 -31.47 -14.85 -92.28 29.47</text>
      {priceScale.map(([y, text]) => text && <text key={y} x="1227" y={y + 3}>{text}</text>)}
      {levelScale.map(([y, text]) => <text key={y} x="1225" y={y + 3}>{text}</text>)}
      {dates.map((d, i) => <text key={d} x={174 + i * 64} y="727">{d}</text>)}
    </g>
    <rect x="1225" y="158" width="29" height="11" fill="#fff" />
    <text x="1227" y="167" fill="#000">95.18</text>
  </svg>
);

const PriceButton = ({ small, big }) => (
  <button type="button" className="flex h-[34px] flex-1 items-baseline justify-center gap-0.5 bg-linear-to-b from-[#2c2ce0] to-[#0000a8]">
    <span className="text-[12px] leading-8 font-bold">{small}</span>
    <span className="text-[20px] leading-8">{big}</span>
  </button>
);

const SideButton = ({ children }) => (
  <button type="button" className="h-5 w-10 border-b border-[#8080ff] bg-linear-to-b from-[#4c4cff] to-[#3434ec]">{children}</button>
);

const OneClick = () => (
  <div className="absolute top-[19px] left-[7px] w-[175px] bg-black text-white">
    <div className="flex justify-between bg-black">
      <SideButton>SELL</SideButton>
      <div className="mt-px flex h-4 text-black">
        <button type="button" aria-label="Decrease volume" className="flex w-4 items-center justify-center bg-[#d6d3ce]">
          <Svg w={7} h={4}><path d="M0 0h7L3.500 4z" fill="#000" /></Svg>
        </button>
        <input aria-label="Volume" defaultValue="0.50" className="w-[54px] bg-white pr-1 text-right outline-none" />
        <button type="button" aria-label="Increase volume" className="flex w-4 items-center justify-center bg-[#d6d3ce]">
          <Svg w={7} h={4}><path d="M0 4h7L3.500 0z" fill="#000" /></Svg>
        </button>
      </div>
      <SideButton>BUY</SideButton>
    </div>
    <div className="flex gap-0.5">
      <PriceButton small="95" big="18" />
      <PriceButton small="95" big="24" />
    </div>
  </div>
);

const ChartTabs = () => (
  <div className="border-t border-[#848284]">
    <div className="flex h-[21px] items-start border-t border-white text-[#555]">
      <div className="h-px w-[3px] bg-black" />
      {chartTabs.map((name) =>
        name === 'AUDJPY' ? (
          <button key={name} type="button" className="h-[19px] w-[89px] border-r-2 border-b border-l border-black bg-white text-black">
            {name},Daily
          </button>
        ) : (
          <div key={name} className="flex h-[19px] w-[87px] items-center border-t border-black">
            <button type="button" className="flex-1 text-center">{name},Daily</button>
            {name !== 'CADJPY' && <span className="h-3 w-px bg-[#555]" />}
          </div>
        )
      )}
      <div className="flex h-[19px] flex-1 items-center justify-end gap-3.5 border-t border-black pr-1">
        <button type="button" aria-label="Previous tabs"><Svg w={4} h={7}><path d="M4 0v7L0 3.500z" fill="#999" /></Svg></button>
        <button type="button" aria-label="Next tabs"><Svg w={4} h={7}><path d="M0 0v7l4-3.500z" fill="#999" /></Svg></button>
      </div>
    </div>
  </div>
);

const OrderIcon = () => (
  <Svg w={14} h={16}>
    <path d="M1.500.5h7l4 4v10h-11z" fill="#fff" stroke="#444" />
    <path d="M8.500.5v4h4" stroke="#444" />
    <circle cx="10" cy="11.500" r="3" fill="#e84818" stroke="#a82808" />
  </Svg>
);

const Terminal = () => (
  <section className="border-t border-white pt-[3px]">
    <table className="w-full table-fixed border-collapse">
      <thead>
        <tr className="h-[18px]">
          {columns.map((col, i) => (
            <th
              key={i}
              className={clsx(
                'border-t border-r border-b-2 border-t-[#848284] border-r-[#555] border-b-[#555] px-1 py-0 font-normal shadow-[inset_1px_1px_0_#fff]',
                i === 0 ? 'text-left' : 'text-right',
                col.width
              )}
            >
              {col.label === 'Taxes' ? (
                <span className="flex items-center justify-end gap-3">
                  Taxes
                  <Svg w={9} h={8}><path d="M4.500.5l4 7H.5z" stroke="#aaa" /></Svg>
                </span>
              ) : col.label}
            </th>
          ))}
        </tr>
      </thead>
      <tbody>
        {orders.map((o, i) => (
          <tr
            key={o.id}
            className={clsx('h-5', o.selected ? 'bg-[#08246b] text-white' : i % 2 ? 'bg-[#efebef]' : 'bg-white')}
          >
            <td className="border-r border-b border-[#cecbce] p-0">
              <div className="flex items-center gap-2 pl-0.5"><OrderIcon />{o.id}</div>
            </td>
            {[`2014.04.10 12:50:${o.sec}`, 'sell', '0.50', o.symbol, o.open, '0.00', '0.00', o.price, '0.00', '0.00', o.swap].map((cell, j) => (
              <td key={j} className="border-r border-b border-[#cecbce] py-0 pr-[3px] pl-0 text-right">{cell}</td>
            ))}
            <td className="border-b border-[#cecbce] p-0 pr-[7px]">
              <div className="flex items-center justify-end gap-2.5">
                {o.profit}
                <button type="button" aria-label={`Close order ${o.id}`}>
                  <Svg w={7} h={7}><path d="M0 .5l7 6M7 .5l-7 6" stroke="#848284" strokeWidth="2" /></Svg>
                </button>
              </div>
            </td>
          </tr>
        ))}
      </tbody>
    </table>
    <div className="flex h-5 items-center bg-[#cecbce] pl-0.5 font-bold">
      <Svg w={13} h={14}>
        <path d="M.5.5h12v13H.5z" fill="#f4fff4" stroke="#666" />
        <path d="M6.500 3l3.500 4H8v4H5V7H3z" fill="#22b022" stroke="#0c700c" />
      </Svg>
      <p className="ml-2 flex-1 whitespace-pre">
        Balance: 11 790.96 USC  Equity: 12 789.31  Margin: 793.97  Free margin: 11 995.34  Margin level: 1610.80%
      </p>
      <span className="pr-6">998.35</span>
    </div>
    <div className="bg-white pt-1">
      <div className="flex h-4 bg-[#f3f2ec]">
        <button type="button" aria-label="Scroll left" className="flex w-4 items-center justify-center rounded-xs border border-[#a8c0f0] bg-[#c4d5fd]">
          <Svg w={6} h={9}><path d="M5 1L1.500 4.500 5 8" stroke="#4a6188" strokeWidth="2" /></Svg>
        </button>
        <div className="ml-[18px] flex flex-1 items-center justify-center rounded-xs border border-[#a8c0f0] bg-linear-to-b from-[#cbdafe] to-[#b8cdfb]">
          <Svg w={8} h={6}><path d="M.5 0v6M2.500 0v6M4.500 0v6M6.500 0v6" stroke="#8ca8e8" /></Svg>
        </div>
        <button type="button" aria-label="Scroll right" className="ml-0.5 flex w-[14px] items-center justify-center rounded-xs border border-[#a8c0f0] bg-[#c4d5fd]">
          <Svg w={6} h={9}><path d="M1 1l3.500 3.500L1 8" stroke="#4a6188" strokeWidth="2" /></Svg>
        </button>
      </div>
    </div>
  </section>
);

const App = () => (
  <div className='min-h-screen border-b-3 border-l border-[#738ade] bg-[#d6d3ce] font-["DejaVu_Sans_Condensed","Liberation_Sans",sans-serif] text-[11px] leading-[14px] text-black'>
    <header>
      <div className="flex h-[17px] items-center justify-between bg-[#08246b]">
        <h1 className="pl-[3px] text-[11px] font-bold text-white">1616144: Alpari Limited MT4 - [AUDJPY,Daily]</h1>
        <CaptionButtons />
      </div>
      <nav className="flex h-[21px] items-center justify-between border-b border-[#848284]">
        <div className="flex gap-4 pl-[9px]">
          {menus.map((m) => <button key={m} type="button">{m}</button>)}
        </div>
        <CaptionButtons />
      </nav>
      <div className="border-t border-white border-b-2 border-b-[#555]">
        <Toolbars />
      </div>
    </header>
    <main>
      <div className="flex">
        <Navigator />
        <div className="min-w-0 flex-1">
          <div className="relative">
            <PriceChart />
            <OneClick />
          </div>
          <ChartTabs />
        </div>
      </div>
      <Terminal />
    </main>
  </div>
);

export default App;
